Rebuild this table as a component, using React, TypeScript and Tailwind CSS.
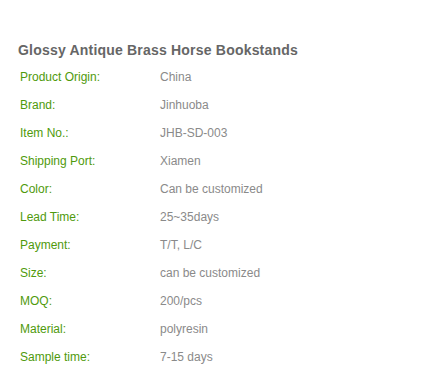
const rows: [string, string][] = [
  ['Product Origin:', 'China'],
  ['Brand:', 'Jinhuoba'],
  ['Item No.:', 'JHB-SD-003'],
  ['Shipping Port:', 'Xiamen'],
  ['Color:', 'Can be customized'],
  ['Lead Time:', '25~35days'],
  ['Payment:', 'T/T, L/C'],
  ['Size:', 'can be customized'],
  ['MOQ:', '200/pcs'],
  ['Material:', 'polyresin'],
  ['Sample time:', '7-15 days'],
];

export default function App() {
  return (
    <div className="w-[443px] h-[386px] bg-white font-['Liberation_Sans',Arial,sans-serif]">
      <div className="pt-[41px] pl-[18px]">
        <h1 className="text-[14px] font-bold leading-[18px] text-[#666666] tracking-[0.2px]">
          Glossy Antique Brass Horse Bookstands
        </h1>
        <div className="mt-[4px] pl-[2px]">
          {rows.map(([label, value]) => (
            <div key={label} className="flex h-[28px] items-center text-[12px]">
              <span className="w-[140px] text-[#4f9a0c]">{label}</span>
              <span className="text-[#8a8a8a]">{value}</span>
            </div>
          ))}
        </div>
      </div>
    </div>
  );
}
